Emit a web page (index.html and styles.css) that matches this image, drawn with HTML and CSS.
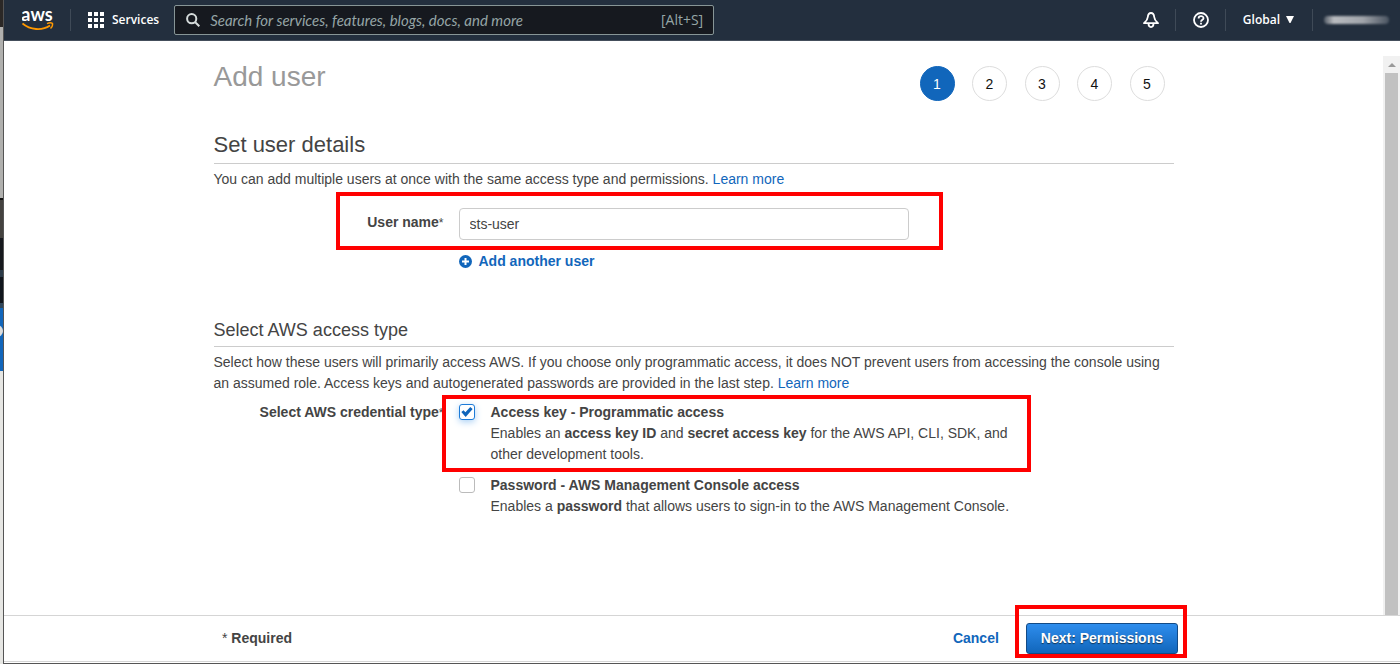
FILE: index.html
```html
<!DOCTYPE html>
<html lang="en">
<head>
<meta charset="utf-8">
<title>Add user</title>
<link rel="stylesheet" href="styles.css">
</head>
<body>
<div class="desktop-edge"><span class="edge-dot"></span></div>
<div class="window">
  <header class="nav">
    <a class="logo" href="#" aria-label="AWS home">
      <svg width="32" height="32" viewBox="0 0 32 32">
        <text class="logo-text" x="15" y="17" text-anchor="middle">aws</text>
        <path d="M.5 19.500C8 26 20 27 28 21.500" fill="none" stroke="#f90" stroke-width="1.800"/>
        <path d="M25 19.600c2-.9 4.500-.8 5.500-.3.3 1.500-.5 3.800-2 5.200" fill="none" stroke="#f90" stroke-width="1.400"/>
      </svg>
    </a>
    <span class="divider"></span>
    <button class="nav-button services" type="button">
      <svg width="16" height="16" viewBox="0 0 16 16" fill="#fff"><path d="M0 0h4v4H0zM6 0h4v4H6zM12 0h4v4h-4zM0 6h4v4H0zM6 6h4v4H6zM12 6h4v4h-4zM0 12h4v4H0zM6 12h4v4H6zM12 12h4v4h-4z"/></svg>
      Services
    </button>
    <label class="search">
      <svg width="14" height="14" viewBox="0 0 14 14" fill="none" stroke="#d5dbdb" stroke-width="2"><circle cx="5.700" cy="5.700" r="4.600"/><path d="M9 9l4.300 4.300"/></svg>
      <input class="search-input" type="search" aria-label="Search" placeholder="Search for services, features, blogs, docs, and more">
      <span class="shortcut">[Alt+S]</span>
    </label>
    <div class="nav-right">
      <button class="nav-button icon-button" type="button" aria-label="Notifications">
        <svg width="16" height="16" viewBox="0 0 16 16" fill="none" stroke="#fff" stroke-width="1.800" stroke-linejoin="round"><path d="M8 1C6 1 5 2.600 4.800 5 4.600 8 3.400 9 1 11.200h14C12.600 9 11.400 8 11.200 5 11 2.600 10 1 8 1z"/><path d="M5.500 11.600c0 4.600 5 4.600 5 0"/></svg>
      </button>
      <span class="divider"></span>
      <button class="nav-button icon-button" type="button" aria-label="Help">
        <svg width="16" height="16" viewBox="0 0 16 16" fill="none" stroke="#fff" stroke-width="1.800"><circle cx="8" cy="8" r="7"/><path d="M5.600 6.500c0-3.200 4.900-3 4.900-.3C10.500 7.800 8 7.700 8 9.800"/><path d="M8 10.800v1.800"/></svg>
      </button>
      <span class="divider"></span>
      <button class="nav-button region" type="button">Global
        <svg width="8" height="7" viewBox="0 0 8 7" fill="#fff"><path d="M0 0h8L4.500 7h-1z"/></svg>
      </button>
      <span class="divider"></span>
      <span class="account"></span>
    </div>
  </header>

  <div class="viewport">
    <main class="page">
      <div class="title-row">
        <h1>Add user</h1>
        <ol class="steps">
          <li class="step current">1</li>
          <li class="step">2</li>
          <li class="step">3</li>
          <li class="step">4</li>
          <li class="step">5</li>
        </ol>
      </div>

      <section class="details">
        <h2>Set user details</h2>
        <p>You can add multiple users at once with the same access type and permissions. <a href="#">Learn more</a></p>
        <div class="form-row user-row">
          <label class="row-label" for="user-name"><b>User name</b><span class="star">*</span></label>
          <input class="text-input" id="user-name" type="text" value="sts-user">
          <span class="mark mark-user"></span>
        </div>
        <button class="add-user" type="button">
          <svg width="13" height="13" viewBox="0 0 13 13"><circle cx="6.500" cy="6.500" r="6.500" fill="#1166bb"/><path d="M6.500 3v7M3 6.500h7" stroke="#fff" stroke-width="2"/></svg>
          Add another user
        </button>
      </section>

      <section class="access">
        <h3>Select AWS access type</h3>
        <p>Select how these users will primarily access AWS. If you choose only programmatic access, it does NOT prevent users from accessing the console using an assumed role. Access keys and autogenerated passwords are provided in the last step. <a href="#">Learn more</a></p>
        <div class="form-row type-row">
          <span class="row-label" id="type-label"><b>Select AWS credential type</b><span class="star">*</span></span>
          <div class="choices" role="group" aria-labelledby="type-label">
            <div class="choice">
              <input class="tick" id="access-key" type="checkbox" checked>
              <label for="access-key"><b>Access key - Programmatic access</b><br>Enables an <b>access key ID</b> and <b>secret access key</b> for the AWS API, CLI, SDK, and other development tools.</label>
              <span class="mark mark-key"></span>
            </div>
            <div class="choice">
              <input class="tick" id="password" type="checkbox">
              <label for="password"><b>Password - AWS Management Console access</b><br>Enables a <b>password</b> that allows users to sign-in to the AWS Management Console.</label>
            </div>
          </div>
        </div>
      </section>
    </main>
    <div class="scrollbar"><span class="scroll-arrow"></span><span class="scroll-thumb"></span></div>
  </div>

  <footer class="footer">
    <div class="footer-inner">
      <span class="required">* <b>Required</b></span>
      <a class="cancel" href="#">Cancel</a>
      <div class="next-wrap">
        <button class="next" type="button">Next: Permissions</button>
        <span class="mark mark-next"></span>
      </div>
    </div>
  </footer>
</div>
</body>
</html>
```
FILE: styles.css
```css
* { box-sizing: border-box; }

body {
  margin: 0;
  min-height: 100vh;
  display: flex;
  background: #fff;
  color: #444;
  font: 14px/21px "Liberation Sans", Arial, sans-serif;
}

h1, h2, h3, p, ol { margin: 0; padding: 0; font-weight: normal; }
a { color: #1166bb; text-decoration: none; }
svg { display: block; flex: none; }
button { border: 0; background: none; padding: 0; font: inherit; cursor: pointer; }

.desktop-edge {
  position: relative;
  width: 4px;
  flex: none;
  overflow: hidden;
  border-right: 1px solid #555;
  background: linear-gradient(#2b2826 27px, #b0b0ae 27px 198px, #111 198px 200px, #44423f 200px 238px, #16181d 238px 270px, #2b3a48 270px 277px, #10151c 277px 303px, #30465a 303px 308px, #1166bb 308px 371px, #e6e6e3 371px);
}
.edge-dot {
  position: absolute;
  left: -9px;
  top: 325px;
  width: 12px;
  height: 12px;
  border-radius: 50%;
  background: #ddd;
}

.window {
  flex: 1;
  min-width: 0;
  display: flex;
  flex-direction: column;
  border-bottom: 1px solid #555;
}

.nav {
  display: flex;
  align-items: center;
  height: 41px;
  padding: 0 11px 1px 18px;
  background: #232f3e;
  border-bottom: 1px solid #444e5b;
  color: #fff;
  font-family: "Open Sans", "Noto Sans", sans-serif;
}
.logo-text { font: 700 18px Lato, sans-serif; fill: #fff; }
.divider { width: 1px; height: 22px; background: #3f4a57; }
.logo + .divider { margin-left: 16px; }
.nav-button {
  display: flex;
  align-items: center;
  color: #fff;
  font-size: 12px;
  font-weight: 600;
}
.services { gap: 8px; margin: 0 15px 0 17px; }
.search {
  display: flex;
  align-items: center;
  flex: 0 1 540px;
  height: 30px;
  padding: 0 10px 0 11px;
  gap: 10px;
  background: #16191f;
  border: 1px solid #879596;
  border-radius: 2px;
}
.search-input {
  flex: 1;
  min-width: 0;
  padding: 0;
  border: 0;
  outline: 0;
  background: none;
  color: #fff;
  font: 15px Lato, sans-serif;
}
.search-input::placeholder { color: #95a5a6; opacity: 1; font-style: italic; }
.shortcut { color: #95a5a6; font-size: 14px; }
.nav-right { display: flex; align-items: center; margin-left: auto; }
.icon-button { margin: 0 16px 0 17px; }
.region { gap: 6px; margin: 0 18px 0 17px; }
.account {
  width: 65px;
  height: 8px;
  margin-left: 11px;
  border-radius: 4px;
  background: linear-gradient(90deg, #555d68, #b9bcc0 15%, #a0a4aa 60%, #4a5461);
  filter: blur(1px);
}

.viewport { flex: 1; display: flex; }
.page { width: 960px; margin: 0 auto; padding-top: 25px; }
.title-row { display: flex; justify-content: space-between; }
h1 { font-size: 28px; line-height: 22px; color: #999; }
.steps {
  display: flex;
  justify-content: space-between;
  width: 245px;
  margin-right: 9px;
  list-style: none;
}
.step {
  width: 35px;
  height: 35px;
  border: 1px solid #ddd;
  border-radius: 50%;
  color: #111;
  line-height: 35px;
  text-align: center;
}
.step.current { background: #1166bb; border-color: #1166bb; color: #fff; }

.details { margin-top: 31px; }
h2 { padding-bottom: 5px; border-bottom: 1px solid #ccc; font-size: 22px; line-height: 26px; }
h2 + p { margin-top: 5px; }
.form-row { display: flex; gap: 15px; }
.row-label { width: 230px; flex: none; text-align: right; }
.star { font-size: 12px; }
.user-row { position: relative; margin-top: 18px; }
.user-row .row-label { padding-top: 4px; }
.text-input {
  width: 450px;
  height: 32px;
  padding: 0 10px;
  border: 1px solid #ccc;
  border-radius: 4px;
  background: #fff;
  color: #444;
  font: inherit;
}
.add-user {
  display: flex;
  align-items: center;
  gap: 7px;
  margin: 11px 0 0 245px;
  color: #1166bb;
  font-weight: bold;
}

.access { margin-top: 46px; }
h3 { padding-bottom: 4px; border-bottom: 1px solid #ccc; font-size: 18px; line-height: 24px; }
h3 + p { margin-top: 5px; }
.type-row { margin-top: 8px; }
.choices { display: flex; flex-direction: column; gap: 10px; }
.choice { position: relative; display: flex; gap: 16px; max-width: 572px; }
.tick {
  appearance: none;
  flex: none;
  width: 16px;
  height: 16px;
  margin: 2px 0 0;
  border: 1px solid #bbb;
  border-radius: 3px;
  background: #fff;
}
.tick:checked { border-color: #1d7bd8; box-shadow: 0 2px 7px #a9d0f5; }
.tick:checked::before {
  content: "";
  display: block;
  width: 14px;
  height: 14px;
  background: #1166bb;
  clip-path: polygon(13% 50%, 29% 38%, 42% 52%, 77% 15%, 94% 28%, 44% 86%);
}

.scrollbar {
  display: flex;
  flex-direction: column;
  width: 17px;
  margin-top: 15px;
  padding: 0 2px;
  background: #f1f1f1;
}
.scroll-arrow {
  margin: 7px 3px 6px;
  border: solid transparent;
  border-width: 0 4px 4px;
  border-bottom-color: #999;
}
.scroll-thumb { flex: 1; background: #c1c1c1; }

.footer { border-top: 1px solid #d5d5d5; border-bottom: 1px solid #d5d5d5; margin-bottom: 1px; }
.footer-inner { display: flex; align-items: center; width: 960px; margin: 0 auto; padding: 7px 4px 7px 0; }
.cancel { margin-left: auto; font-weight: bold; }
.next-wrap { position: relative; margin-left: 27px; }
.next {
  display: block;
  height: 31px;
  padding: 0 14px;
  border: 1px solid #124a86;
  border-radius: 3px;
  background: linear-gradient(#2e8ded, #1166bb);
  color: #fff;
  font-weight: bold;
  text-shadow: 0 1px 1px #113355;
}

/* Red callout frames drawn over the form */
.mark { position: absolute; border: 4px solid #f00; pointer-events: none; }
.mark-user { left: 122px; top: -16px; width: 607px; height: 58px; }
.mark-key { left: -17px; top: -7px; width: 589px; height: 77px; }
.mark-next { left: -11px; top: -18px; width: 172px; height: 53px; }
```
